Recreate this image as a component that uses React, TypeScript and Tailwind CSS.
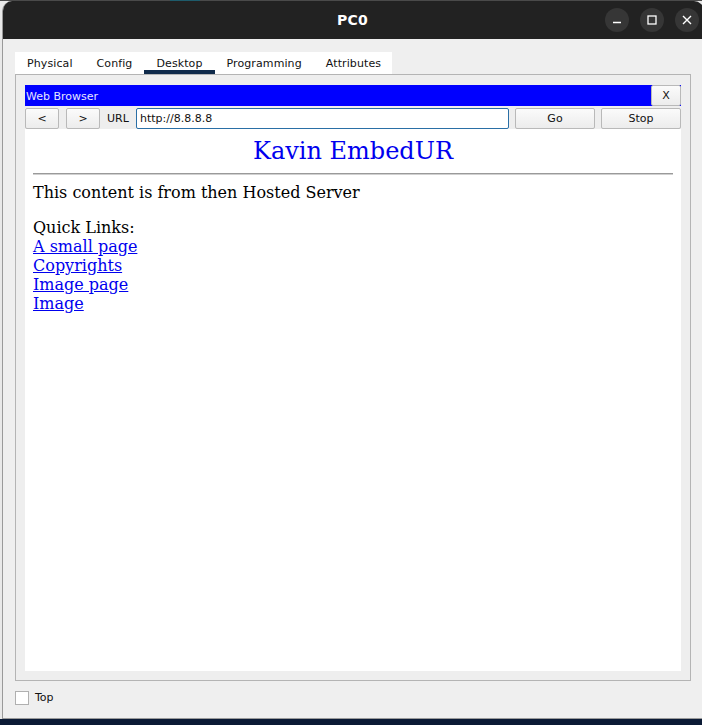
import React from "react";

const ui = { fontFamily: '"DejaVu Sans", sans-serif' };
const serif = { fontFamily: '"DejaVu Serif", serif' };

function Btn({ children, w }: { children: React.ReactNode; w: string }) {
  return (
    <div
      className={`${w} h-[21px] pt-[2px] flex items-center justify-center rounded-[2px] border border-[#b9b9b9] bg-gradient-to-b from-[#fbfbfb] to-[#ececec] text-[11px] text-[#111]`}
    >
      {children}
    </div>
  );
}

export default function App() {
  const tabs = ["Physical", "Config", "Desktop", "Programming", "Attributes"];
  return (
    <div className="w-[702px] h-[725px] bg-[#e9e9e9] flex flex-col overflow-hidden relative" style={ui}>
      <div className="h-[1px] w-full bg-[#4a4a4a] flex shrink-0">
        <div className="ml-[170px] w-[30px] bg-[#1e5b6b]" />
      </div>
      <div className="ml-[2px] w-[702px] h-[718px] flex flex-col bg-[#efefef] border-l border-b border-[#9a9a9a] rounded-t-[10px] overflow-hidden shrink-0">
        {/* Title bar */}
        <div className="h-[38px] bg-[#222222] relative flex items-center justify-center shrink-0">
          <span className="text-white text-[14px] font-bold tracking-[0.3px] mr-[2px]">PC0</span>
          <div className="absolute right-[5px] top-[7px] flex gap-[11px]">
            <div className="w-[24px] h-[24px] rounded-full bg-[#363636] flex items-center justify-center">
              <svg width="10" height="10" viewBox="0 0 10 10">
                <line x1="1" y1="7.5" x2="9" y2="7.5" stroke="white" strokeWidth="1.4" />
              </svg>
            </div>
            <div className="w-[24px] h-[24px] rounded-full bg-[#363636] flex items-center justify-center">
              <svg width="10" height="10" viewBox="0 0 10 10">
                <rect x="1" y="1" width="8" height="8" fill="none" stroke="white" strokeWidth="1.3" />
              </svg>
            </div>
            <div className="w-[24px] h-[24px] rounded-full bg-[#363636] flex items-center justify-center">
              <svg width="10" height="10" viewBox="0 0 10 10">
                <path d="M1 1 L9 9 M9 1 L1 9" stroke="white" strokeWidth="1.4" />
              </svg>
            </div>
          </div>
        </div>

        {/* Body */}
        <div className="flex-1 flex flex-col pl-[12px] pr-[10px] pt-[13px]">
          {/* Tabs */}
          <div className="flex bg-white w-[377px] h-[22px] text-[11px] text-[#111] tracking-[0.1px]">
            {tabs.map((t) => (
              <div
                key={t}
                className={`px-[12px] h-full flex items-center ${t === "Desktop" ? "border-b-[4px] border-[#0f2a4a] pt-[6px]" : "pt-[2px]"}`}
              >
                {t}
              </div>
            ))}
          </div>
          {/* Panel */}
          <div className="w-[676px] h-[607px] border border-[#b4b4b4] bg-[#eeeeee] pl-[9px] pr-[9px] pt-[10px] pb-[9px] flex flex-col">
            {/* Blue bar */}
            <div className="h-[21px] bg-[#0000ff] flex items-center justify-between shrink-0">
              <span className="text-[11px] text-[#e6e6ff] pl-[1px] mt-[3px]">Web Browser</span>
              <Btn w="w-[30px]">X</Btn>
            </div>
            {/* Nav row */}
            <div className="h-[21px] mt-[2px] flex items-center shrink-0">
              <Btn w="w-[34px]">&lt;</Btn>
              <div className="w-[7px]" />
              <Btn w="w-[34px]">&gt;</Btn>
              <span className="text-[11px] text-[#111] ml-[7px] w-[29px] mt-[2px]">URL</span>
              <div className="flex-1 h-[21px] pt-[2px] bg-white border border-[#2a6fa6] rounded-[2px] flex items-center pl-[3px] text-[11px] text-[#111]">
                http://8.8.8.8
              </div>
              <div className="w-[6px]" />
              <Btn w="w-[80px]">Go</Btn>
              <div className="w-[6px]" />
              <Btn w="w-[80px]">Stop</Btn>
            </div>
            {/* Page */}
            <div className="flex-1 bg-white px-[8px] pt-[8px]" style={serif}>
              <div className="text-center text-[24px] leading-[28px] text-[#0000ee]">Kavin EmbedUR</div>
              <div className="mt-[8px] h-[2px] bg-[#9a9a9a] border-b border-[#d0d0d0]" />
              <div className="mt-[8px] text-[16px] leading-[19px] text-black">
                <p>This content is from then Hosted Server</p>
                <p className="mt-[16px]">Quick Links:</p>
                <a className="underline text-[#0000ee] block w-fit">A small page</a>
                <a className="underline text-[#0000ee] block w-fit">Copyrights</a>
                <a className="underline text-[#0000ee] block w-fit">Image page</a>
                <a className="underline text-[#0000ee] block w-fit">Image</a>
              </div>
            </div>
          </div>
          {/* Bottom */}
          <div className="flex items-center mt-[10px] h-[14px]">
            <div className="w-[14px] h-[14px] bg-white border border-[#b0b0b0]" />
            <span className="ml-[6px] text-[11px] text-[#111] mt-[1px]">Top</span>
          </div>
        </div>
      </div>
      <div className="flex-1 bg-[#0b1a35]" />
    </div>
  );
}
